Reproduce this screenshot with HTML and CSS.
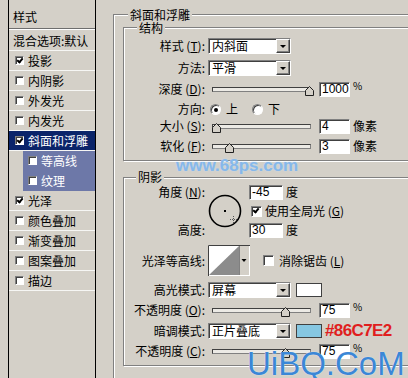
FILE: index.html
```html
<!DOCTYPE html>
<html lang="zh-CN">
<head>
  <meta charset="UTF-8">
  <title>图层样式 - 斜面和浮雕</title>
  <link rel="stylesheet" href="styles.css">
</head>
<body>
  <div class="dialog">
    <ul class="styles">
      <li class="head">样式</li>
      <li class="blend">混合选项:默认</li>
      <li><span class="box on"></span>投影</li>
      <li><span class="box"></span>内阴影</li>
      <li><span class="box"></span>外发光</li>
      <li><span class="box"></span>内发光</li>
      <li class="sel"><span class="box on"></span>斜面和浮雕</li>
      <li class="sub"><span class="box"></span>等高线</li>
      <li class="sub"><span class="box"></span>纹理</li>
      <li><span class="box on"></span>光泽</li>
      <li><span class="box"></span>颜色叠加</li>
      <li><span class="box"></span>渐变叠加</li>
      <li><span class="box"></span>图案叠加</li>
      <li><span class="box"></span>描边</li>
    </ul>

    <div class="main">
      <fieldset class="group outer">
        <legend>斜面和浮雕</legend>

        <!-- 结构 -->
        <fieldset class="group struct">
          <legend>结构</legend>
          <div class="row">
            <label class="lbl">样式 (<u>T</u>):</label>
            <div class="select"><span>内斜面</span><i class="drop"></i></div>
          </div>
          <div class="row mt6">
            <label class="lbl">方法:</label>
            <div class="select"><span>平滑</span><i class="drop"></i></div>
          </div>
          <div class="row">
            <label class="lbl">深度 (<u>D</u>):</label>
            <div class="slider">
              <svg class="thumb" style="left:100%" width="9" height="10" viewBox="0 0 9 10"><path d="M4.5 .5 8.5 4.5V9.5H.5V4.5Z"/></svg>
            </div>
            <span class="num">1000</span><span class="pct">%</span>
          </div>
          <div class="row mt4">
            <label class="lbl">方向:</label>
            <span class="radio on"></span><span class="opt">上</span>
            <span class="radio second"></span><span class="opt">下</span>
          </div>
          <div class="row mt1">
            <label class="lbl">大小 (<u>S</u>):</label>
            <div class="slider">
              <svg class="thumb" style="left:4%" width="9" height="10" viewBox="0 0 9 10"><path d="M4.5 .5 8.5 4.5V9.5H.5V4.5Z"/></svg>
            </div>
            <span class="num">4</span><span class="unit">像素</span>
          </div>
          <div class="row mt4">
            <label class="lbl">软化 (<u>F</u>):</label>
            <div class="slider">
              <svg class="thumb" style="left:18%" width="9" height="10" viewBox="0 0 9 10"><path d="M4.5 .5 8.5 4.5V9.5H.5V4.5Z"/></svg>
            </div>
            <span class="num">3</span><span class="unit">像素</span>
          </div>
        </fieldset>

        <!-- 阴影 -->
        <fieldset class="group shade">
          <legend>阴影</legend>
          <div class="angle">
            <label class="lbl">角度 (<u>N</u>):</label>
            <svg class="dial" width="34" height="34" viewBox="0 0 34 34">
              <circle cx="17" cy="17" r="15.5" fill="none" stroke="#000" stroke-width="1.6"/>
              <rect x="16" y="16" width="2" height="2" fill="#000"/>
              <path d="M22 25.5h7M25.5 22v7" stroke="#555" stroke-width="1" stroke-dasharray="1 1"/>
            </svg>
            <div class="ctl c1"><span class="num small">-45</span><span class="unit">度</span></div>
            <div class="ctl c2"><span class="box on"></span><span class="opt">使用全局光 (<u>G</u>)</span></div>
            <label class="lbl l3">高度:</label>
            <div class="ctl c3"><span class="num small">30</span><span class="unit">度</span></div>
          </div>
          <div class="row tall mt7">
            <label class="lbl">光泽等高线:</label>
            <svg class="contour" width="42" height="31" viewBox="0 0 42 31">
              <rect x="0" y="0" width="42" height="31" fill="#fff"/>
              <rect x="1" y="1" width="30" height="29" fill="#fff"/>
              <path d="M1 30 31 1V30Z" fill="#8c8c8c"/>
              <rect x="31" y="1" width="10" height="29" fill="#d4d0c8"/>
              <path d="M31.5 30V1" stroke="#808080"/>
              <path d="M33.5 14h5l-2.5 3z" fill="#000"/>
              <path d="M.5 31V.5H42" fill="none" stroke="#404040"/>
            </svg>
            <span class="box aa"></span><span class="opt">消除锯齿 (<u>L</u>)</span>
          </div>
          <div class="row mt6">
            <label class="lbl">高光模式:</label>
            <div class="select"><span>屏幕</span><i class="drop"></i></div>
            <span class="swatch"></span>
          </div>
          <div class="row mt4">
            <label class="lbl">不透明度 (<u>O</u>):</label>
            <div class="slider">
              <svg class="thumb" style="left:75%" width="9" height="10" viewBox="0 0 9 10"><path d="M4.5 .5 8.5 4.5V9.5H.5V4.5Z"/></svg>
            </div>
            <span class="num">75</span><span class="pct">%</span>
          </div>
          <div class="row">
            <label class="lbl">暗调模式:</label>
            <div class="select"><span>正片叠底</span><i class="drop"></i></div>
            <span class="swatch blue"></span><span class="hex">#86C7E2</span>
          </div>
          <div class="row mt4">
            <label class="lbl">不透明度 (<u>C</u>):</label>
            <div class="slider">
              <svg class="thumb" style="left:75%" width="9" height="10" viewBox="0 0 9 10"><path d="M4.5 .5 8.5 4.5V9.5H.5V4.5Z"/></svg>
            </div>
            <span class="num">75</span><span class="pct">%</span>
          </div>
        </fieldset>
      </fieldset>
    </div>
  </div>

  <div class="mark">www.68ps.com</div>
  <div class="mark2">UiBQ.CoM</div>
</body>
</html>
```

FILE: styles.css
```css
html, body {
  margin: 0;
  height: 100%;
  overflow: hidden;
}
body {
  background: #d4d0c8;
  color: #000;
  font: 12px/16px "Noto Sans CJK SC", "Liberation Sans", sans-serif;
  position: relative;
}
u {
  text-decoration: underline;
}
.dialog {
  display: flex;
  height: 100%;
}

/* left list of effects */
.styles {
  list-style: none;
  margin: 0 0 0 8px;
  padding: 0;
  width: 86px;
  flex: none;
  border-left: 1px solid #000;
  border-right: 1px solid #000;
}
.styles li {
  height: 19px;
  display: flex;
  align-items: center;
  gap: 4px;
  padding-left: 6px;
  border-bottom: 1px solid #f6f6f4;
  white-space: nowrap;
}
.styles .head {
  height: 19px;
  padding: 9px 0 0 4px;
  align-items: flex-start;
  border-bottom: 1px solid #6e6e6e;
  box-shadow: 0 1px #fff;
}
.styles .blend {
  margin-top: 2px;
  padding-left: 4px;
}
.styles .sel {
  background: #0a246a;
  color: #fff;
}
.styles .sub {
  margin-left: 14px;
  padding-left: 5px;
  background: #6d78a8;
  color: #fff;
  border-bottom-color: #6d78a8;
}
.styles .box {
  width: 9px;
  height: 9px;
}

/* checkbox / radio */
.box {
  position: relative;
  flex: none;
  width: 11px;
  height: 11px;
  box-sizing: border-box;
  background: #fff;
  border: 1px solid;
  border-color: #808080 #fff #fff #808080;
  box-shadow: inset 1px 1px #404040;
}
.box.on::after {
  content: "";
  position: absolute;
  left: 2px;
  top: 0;
  width: 2px;
  height: 4px;
  border: solid #000;
  border-width: 0 2px 2px 0;
  transform: rotate(40deg);
}
.radio {
  position: relative;
  flex: none;
  width: 11px;
  height: 11px;
  box-sizing: border-box;
  border-radius: 50%;
  background: #fff;
  border: 1px solid;
  border-color: #808080 #fff #fff #808080;
  box-shadow: inset 1px 1px #404040;
  margin-left: 2px;
}
.radio.on::after {
  content: "";
  position: absolute;
  left: 3px;
  top: 3px;
  width: 4px;
  height: 4px;
  border-radius: 50%;
  background: #000;
}
.radio.second {
  margin-left: 14px;
}
.opt {
  margin-left: 5px;
  white-space: nowrap;
}

/* group boxes */
.main {
  margin-left: 17px;
  padding-top: 8px;
  width: 320px;
  flex: none;
}
.group {
  margin: 0;
  padding: 0;
  min-width: 0;
  border: 1px solid #808080;
  box-shadow: inset 1px 1px #fff, 1px 1px #fff;
}
.group legend {
  padding: 0 2px;
  line-height: 13px;
  background: #d4d0c8;
}
.outer {
  padding: 0 0 30px 9px;
}
.outer > legend {
  margin-left: 5px;
}
.struct {
  padding: 4px 0 6px;
}
.struct > legend {
  margin-left: 13px;
}
.shade {
  margin-top: 9px;
  padding: 0 0 6px;
}
.shade > legend {
  margin-left: 12px;
  line-height: 14px;
}

/* form rows */
.row {
  display: flex;
  align-items: center;
  height: 16px;
  margin-top: 5px;
}
.struct > .row:first-of-type {
  margin-top: 0;
}
.row.tall {
  height: 31px;
}
.mt1 { margin-top: 1px; }
.mt4 { margin-top: 4px; }
.mt6 { margin-top: 6px; }
.mt7 { margin-top: 7px; }

.lbl {
  flex: none;
  width: 81px;
  margin-right: 3px;
  text-align: right;
  white-space: nowrap;
}

.select {
  flex: none;
  display: flex;
  align-items: center;
  width: 83px;
  height: 16px;
  box-sizing: border-box;
  padding-left: 3px;
  background: #fff;
  border: 1px solid;
  border-color: #808080 #fff #fff #808080;
  box-shadow: inset 1px 1px #404040;
  white-space: nowrap;
}
.drop {
  position: relative;
  margin-left: auto;
  width: 14px;
  height: 14px;
  box-sizing: border-box;
  background: #d4d0c8;
  border: 1px solid;
  border-color: #fff #404040 #404040 #fff;
  box-shadow: inset -1px -1px #808080;
}
.drop::after {
  content: "";
  position: absolute;
  left: 3px;
  top: 5px;
  border-left: 3px solid transparent;
  border-right: 3px solid transparent;
  border-top: 3px solid #000;
}

.slider {
  position: relative;
  flex: none;
  width: 99px;
  height: 5px;
  margin-left: 4px;
  box-sizing: border-box;
  background: #eceae5;
  border: 1px solid;
  border-color: #404040 #808080 #808080 #404040;
}
.thumb {
  position: absolute;
  top: -2px;
  margin-left: -5px;
}
.thumb path {
  fill: #d4d0c8;
  stroke: #202020;
  stroke-width: 1;
}

.num {
  flex: none;
  width: 31px;
  height: 15px;
  margin-left: 8px;
  box-sizing: border-box;
  padding-left: 2px;
  background: #fff;
  border: 1px solid;
  border-color: #808080 #fff #fff #808080;
  box-shadow: inset 1px 1px #404040;
  line-height: 13px;
  font-family: "Liberation Sans", sans-serif;
}
.num.small {
  width: 34px;
  margin-left: 0;
}
.pct {
  align-self: flex-start;
  margin-left: 3px;
  font-size: 10px;
  line-height: 10px;
}
.unit {
  margin-left: 3px;
}

/* angle dial block */
.angle {
  display: grid;
  grid-template-columns: 81px 38px auto;
  grid-template-rows: 16px 16px 16px;
  column-gap: 3px;
  row-gap: 3px;
  align-items: center;
}
.angle .lbl {
  width: auto;
  margin: 0;
}
.angle .l3 {
  grid-row: 3;
  grid-column: 1;
}
.dial {
  grid-column: 2;
  grid-row: 1 / 4;
  align-self: center;
}
.ctl {
  grid-column: 3;
  display: flex;
  align-items: center;
}
.c1 { grid-row: 1; }
.c2 { grid-row: 2; padding-left: 2px; }
.c2 .opt { margin-left: 3px; }
.c3 { grid-row: 3; }

.contour {
  flex: none;
}
.box.aa {
  margin-left: 13px;
}

.swatch {
  flex: none;
  width: 26px;
  height: 14px;
  margin-left: 5px;
  box-sizing: border-box;
  background: #fff;
  border: 1px solid #404040;
}
.swatch.blue {
  background: #86c7e2;
}
.hex {
  margin-left: 3px;
  color: #e01e1e;
  font: bold 17px/16px "Liberation Sans", sans-serif;
  letter-spacing: -0.6px;
  white-space: nowrap;
}

/* watermarks */
.mark {
  position: absolute;
  left: 176px;
  top: 157px;
  font: bold 17px/18px "Liberation Sans", sans-serif;
  color: #86b8ea;
  text-shadow: 0 0 2px #c4dbf1;
}
.mark2 {
  position: absolute;
  left: 247px;
  top: 347px;
  font: 33px/33px "Liberation Sans", sans-serif;
  color: #3b87d6;
  text-shadow: 0 0 1px #fff;
}
```
